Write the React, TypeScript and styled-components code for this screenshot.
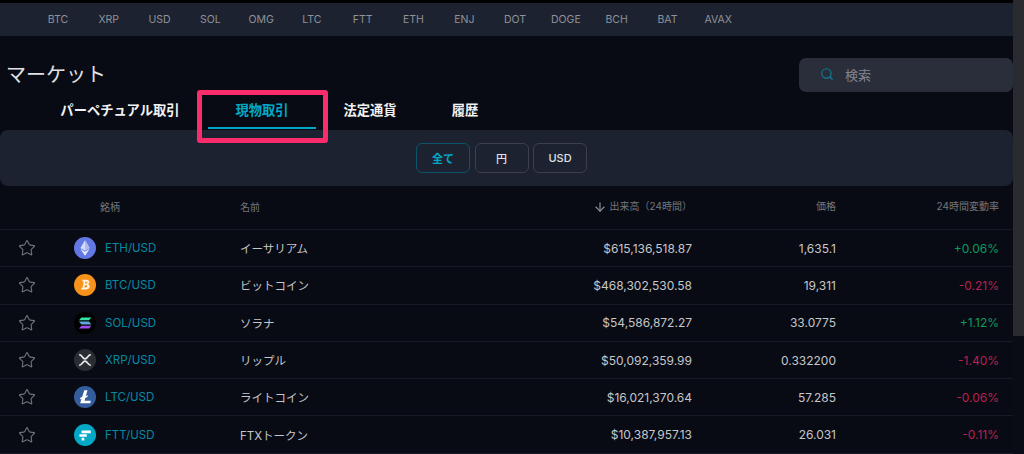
import React from 'react';
import styled, { createGlobalStyle } from 'styled-components';
import { ArrowDown, Search, Star } from 'lucide-react';

const GlobalStyle = createGlobalStyle`
  html, body {
    margin: 0;
    padding: 0;
    background: #080b14;
    overflow: hidden;
  }
  body {
    font-family: Inter, "Noto Sans CJK JP", sans-serif;
  }
`;

const Page = styled.div`
  width: 1024px;
  height: 454px;
  display: flex;
  overflow: hidden;
  background: #080b14;
`;

const Main = styled.div`
  width: 1013px;
  flex: none;
`;

const Scrollbar = styled.div`
  flex: 1;
  background: #090c15;
`;

const ScrollThumb = styled.div`
  height: 336px;
  background: #292b30;
`;

const TopEdge = styled.div`
  height: 3px;
  background: #000;
`;

const TickerBar = styled.div`
  height: 33px;
  background: #1c2230;
  display: grid;
  grid-template-columns: repeat(14, 50.8px);
  padding-left: 32.5px;
  align-items: center;
`;

const Ticker = styled.span`
  text-align: center;
  font-size: 10.5px;
  color: #8f9298;
`;

const TitleRow = styled.div`
  display: flex;
  justify-content: space-between;
  align-items: center;
  height: 34px;
  margin-top: 22px;
  padding-left: 7px;
`;

const Title = styled.h1`
  margin: -4px 0 0 -1px;
  font-size: 20px;
  font-weight: 400;
  color: #e0e1e3;
`;

const SearchBox = styled.div`
  width: 214px;
  height: 34px;
  box-sizing: border-box;
  padding: 0 0 2px 21px;
  display: flex;
  align-items: center;
  gap: 11px;
  background: #2a2d3a;
  border-radius: 7px;
  color: #0e7f99;
`;

const SearchLabel = styled.span`
  font-size: 13px;
  color: #82858e;
`;

const TabRow = styled.div`
  position: relative;
  display: flex;
  height: 38px;
  padding-left: 32px;
`;

const Tab = styled.div<{ $width: number; $active?: boolean }>`
  position: relative;
  width: ${p => p.$width}px;
  height: 37px;
  box-sizing: border-box;
  padding-top: 8px;
  text-align: center;
  font-size: 13.3px;
  line-height: 20px;
  font-weight: 700;
  color: ${p => (p.$active ? '#00a8c6' : '#f2f2f3')};

  ${p =>
    p.$active &&
    `
    &::after {
      content: '';
      position: absolute;
      left: 0;
      right: 0;
      bottom: 0;
      height: 2px;
      background: #00a8c6;
    }
  `}
`;

const Highlight = styled.div`
  position: absolute;
  left: 197px;
  top: -2px;
  width: 131px;
  height: 53px;
  box-sizing: border-box;
  border: 5px solid #fb2c6b;
  border-radius: 3px;
  z-index: 2;
`;

const FilterPanel = styled.div`
  height: 56px;
  background: #1c2230;
  border-radius: 8px;
  display: flex;
  justify-content: center;
  align-items: center;
  gap: 4.5px;
  padding-right: 10px;
  box-sizing: border-box;
`;

const FilterButton = styled.div<{ $active?: boolean }>`
  width: 54px;
  height: 30px;
  box-sizing: border-box;
  display: flex;
  align-items: center;
  justify-content: center;
  border-radius: 6px;
  font-size: 11px;
  font-weight: ${p => (p.$active ? 700 : 500)};
  border: 1px solid ${p => (p.$active ? '#0c5568' : '#3c404b')};
  color: ${p => (p.$active ? '#00a8c6' : '#e0e1e3')};
`;

const columns = '74px 166px 130px 322px 144px 163px';

const HeaderRow = styled.div`
  height: 43px;
  display: grid;
  grid-template-columns: ${columns};
  align-items: center;
  border-bottom: 1px solid #161a24;
  font-size: 10px;
  color: #74767c;
`;

const HeaderCell = styled.div<{ $right?: boolean; $inset?: number }>`
  display: flex;
  align-items: center;
  padding-left: ${p => p.$inset || 0}px;
  justify-content: ${p => (p.$right ? 'flex-end' : 'flex-start')};
  margin-top: ${p => (p.$right ? -5 : -2)}px;
`;

const SortIcon = styled(ArrowDown)`
  width: 14px;
  height: 14px;
  color: #8d9097;
  margin: 3px 3px 0 0;
`;

const Row = styled.div`
  height: 37.3px;
  box-sizing: border-box;
  display: grid;
  grid-template-columns: ${columns};
  align-items: center;
  border-bottom: 1px solid #161a24;
`;

const StarCell = styled.div`
  padding-left: 18px;
  display: flex;
  color: #6f727a;
`;

const Market = styled.div`
  display: flex;
  align-items: center;
  gap: 9px;
`;

const CoinIcon = styled.svg`
  width: 22px;
  height: 22px;
  flex: none;
`;

const Symbol = styled.span`
  font-size: 11.5px;
  color: #058aa3;
`;

const Name = styled.div`
  font-size: 11.5px;
  color: #c6c7ca;
`;

const Amount = styled.div`
  text-align: right;
  font-size: 12px;
  color: #c6c7ca;
`;

const Change = styled.div<{ $up: boolean }>`
  text-align: right;
  font-size: 12px;
  color: ${p => (p.$up ? '#0c9a5e' : '#b9214e')};
`;

const tickers = ['BTC', 'XRP', 'USD', 'SOL', 'OMG', 'LTC', 'FTT', 'ETH', 'ENJ', 'DOT', 'DOGE', 'BCH', 'BAT', 'AVAX'];

const coinArt: Record<string, React.ReactNode> = {
  ETH: (
    <>
      <circle cx="11" cy="11" r="11" fill="#6278e4" />
      <path d="M11 3.2 6.4 11 11 13.7 15.6 11Z" fill="#d5dcfa" />
      <path d="M11 3.2V13.7L15.6 11Z" fill="#aebbf3" />
      <path d="M6.4 12 11 18.8 15.6 12 11 14.7Z" fill="#e8ecfd" />
    </>
  ),
  BTC: (
    <>
      <circle cx="11" cy="11" r="11" fill="#f7931a" />
      <path
        d="M8.4 5.8h4.1c1.7 0 2.8.9 2.8 2.3 0 1-.5 1.7-1.4 2.1 1.1.3 1.8 1.2 1.8 2.4 0 1.7-1.3 2.8-3.3 2.8H7.2l.4-1.6h1l1.1-6.4h-1.1Zm3 1.9-.3 1.9h1.3c.7 0 1.1-.4 1.1-1 0-.6-.4-.9-1-.9Zm-.6 3.5-.4 2.3h1.6c.8 0 1.3-.5 1.3-1.2 0-.7-.5-1.1-1.3-1.1Z"
        fill="#fff"
        opacity="0.9"
      />
    </>
  ),
  SOL: (
    <>
      <circle cx="11" cy="11" r="11" fill="#000" />
      <path d="M7.4 5.5h10l-2.4 2.8H5Z" fill="#2fe6a8" />
      <path d="M5 9.6h10l2.4 2.8h-10Z" fill="#5fa8d6" />
      <path d="M7.4 13.7h10L15 16.5H5Z" fill="#a04ff0" />
    </>
  ),
  XRP: (
    <>
      <circle cx="11" cy="11" r="11" fill="#2a2d33" />
      <path
        d="M5.2 5.6c1.9.2 2.9 2 4.2 3.5.9 1 2.3 1 3.2 0 1.3-1.5 2.3-3.3 4.2-3.5M5.2 16.4c1.9-.2 2.9-2 4.2-3.5.9-1 2.3-1 3.2 0 1.3 1.5 2.3 3.3 4.2 3.5"
        fill="none"
        stroke="#e4e5e7"
        strokeWidth="1.8"
      />
    </>
  ),
  LTC: (
    <>
      <circle cx="11" cy="11" r="11" fill="#345d9d" />
      <path d="M10.3 4.2h3.2l-1.6 5.8 2-.7-.5 1.8-2 .7-.8 3h6.2l-.6 2.4H6.2l1.3-4.4-1.6.6.4-1.7 1.8-.6Z" fill="#fff" />
    </>
  ),
  FTT: (
    <>
      <circle cx="11" cy="11" r="11" fill="#02a9c7" />
      <path d="M7.6 6.6h9.2v2.6H7.6ZM5.4 10.2h7.4v2.5H5.4ZM7.6 13.8h2.7v2.6H7.6Z" fill="#fff" />
    </>
  ),
};

const rows = [
  { coin: 'ETH', name: 'イーサリアム', volume: '$615,136,518.87', price: '1,635.1', change: '+0.06%' },
  { coin: 'BTC', name: 'ビットコイン', volume: '$468,302,530.58', price: '19,311', change: '-0.21%' },
  { coin: 'SOL', name: 'ソラナ', volume: '$54,586,872.27', price: '33.0775', change: '+1.12%' },
  { coin: 'XRP', name: 'リップル', volume: '$50,092,359.99', price: '0.332200', change: '-1.40%' },
  { coin: 'LTC', name: 'ライトコイン', volume: '$16,021,370.64', price: '57.285', change: '-0.06%' },
  { coin: 'FTT', name: 'FTXトークン', volume: '$10,387,957.13', price: '26.031', change: '-0.11%' },
];

export default function App() {
  return (
    <Page>
      <GlobalStyle />
      <Main>
        <TopEdge />
        <TickerBar>
          {tickers.map(t => (
            <Ticker key={t}>{t}</Ticker>
          ))}
        </TickerBar>
        <TitleRow>
          <Title>マーケット</Title>
          <SearchBox>
            <Search size={14} strokeWidth={2} />
            <SearchLabel>検索</SearchLabel>
          </SearchBox>
        </TitleRow>
        <TabRow>
          <Tab $width={176}>パーペチュアル取引</Tab>
          <Tab $width={108} $active>現物取引</Tab>
          <Tab $width={108}>法定通貨</Tab>
          <Tab $width={82}>履歴</Tab>
          <Highlight />
        </TabRow>
        <FilterPanel>
          <FilterButton $active>全て</FilterButton>
          <FilterButton>円</FilterButton>
          <FilterButton>USD</FilterButton>
        </FilterPanel>
        <HeaderRow>
          <div />
          <HeaderCell $inset={26}>銘柄</HeaderCell>
          <HeaderCell>名前</HeaderCell>
          <HeaderCell $right>
            <SortIcon />
            出来高（24時間）
          </HeaderCell>
          <HeaderCell $right>価格</HeaderCell>
          <HeaderCell $right>24時間変動率</HeaderCell>
        </HeaderRow>
        {rows.map(r => (
          <Row key={r.coin}>
            <StarCell>
              <Star size={18} strokeWidth={1.5} />
            </StarCell>
            <Market>
              <CoinIcon viewBox="0 0 22 22">{coinArt[r.coin]}</CoinIcon>
              <Symbol>{r.coin}/USD</Symbol>
            </Market>
            <Name>{r.name}</Name>
            <Amount>{r.volume}</Amount>
            <Amount>{r.price}</Amount>
            <Change $up={r.change.startsWith('+')}>{r.change}</Change>
          </Row>
        ))}
      </Main>
      <Scrollbar>
        <ScrollThumb />
      </Scrollbar>
    </Page>
  );
}
